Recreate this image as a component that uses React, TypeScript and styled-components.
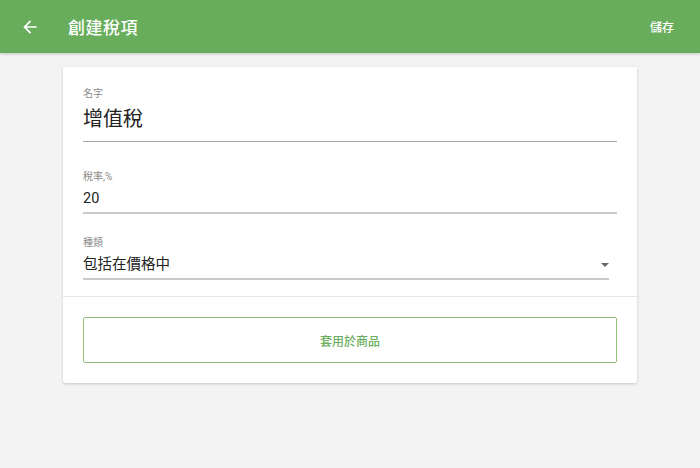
import React from "react";
import styled, { createGlobalStyle } from "styled-components";

const GlobalStyle = createGlobalStyle`
  html, body {
    margin: 0;
    padding: 0;
    background: #f3f3f3;
    font-family: Roboto, "Noto Sans CJK TC", "Noto Sans", sans-serif;
  }
`;

const green = "#68ad5c";

const App = () => {
  return (
    <>
      <GlobalStyle />
      <Page>
        <Header>
          <BackButton aria-label="back">
            <svg width="20" height="20" viewBox="0 0 24 24">
              <path
                d="M20 11H7.83l5.59-5.59L12 4l-8 8 8 8 1.41-1.41L7.83 13H20v-2z"
                fill="#fff"
              />
            </svg>
          </BackButton>
          <Title>創建稅項</Title>
          <SaveButton>儲存</SaveButton>
        </Header>
        <Card>
          <Fields>
            <Field $extra={6}>
              <Label>名字</Label>
              <NameValue>增值稅</NameValue>
              <Underline $dark />
            </Field>
            <Field>
              <Label>稅率,%</Label>
              <Value>20</Value>
              <Underline />
            </Field>
            <Field $short>
              <Label>種類</Label>
              <SelectRow>
                <Value>包括在價格中</Value>
                <Caret />
              </SelectRow>
              <Underline />
            </Field>
          </Fields>
          <Footer>
            <OutlineButton>套用於商品</OutlineButton>
          </Footer>
        </Card>
      </Page>
    </>
  );
};

const Page = styled.div`
  min-height: 468px;
  background: #f3f3f3;
`;

const Header = styled.header`
  height: 53px;
  background: ${green};
  display: flex;
  align-items: center;
  padding: 0 26px 0 20px;
  color: #fff;
  box-shadow: 0 1px 3px rgba(0, 0, 0, 0.2);
`;

const BackButton = styled.div`
  width: 20px;
  height: 20px;
  display: flex;
  align-items: center;
  justify-content: center;
  margin-right: 28px;
`;

const Title = styled.div`
  flex: 1;
  font-size: 17px;
  font-weight: 500;
  letter-spacing: 0.5px;
`;

const SaveButton = styled.div`
  font-size: 12px;
  font-weight: 500;
`;

const Card = styled.div`
  width: 574px;
  margin: 14px auto 0;
  background: #fff;
  box-shadow: 0 1px 3px rgba(0, 0, 0, 0.18);
  border-radius: 2px;
`;

const Fields = styled.div`
  padding: 20px 20px 16px;
  border-bottom: 1px solid #e6e6e6;
  display: flex;
  flex-direction: column;
  gap: 22px;
`;

const Field = styled.div<{ $short?: boolean; $extra?: number }>`
  display: flex;
  flex-direction: column;
  margin-right: ${(p) => (p.$short ? "8px" : "0")};
  margin-bottom: ${(p) => p.$extra ?? 0}px;
`;

const Label = styled.div`
  font-size: 10px;
  line-height: 14px;
  color: #8a8a8a;
  margin-bottom: 4px;
`;

const NameValue = styled.div`
  font-size: 20px;
  line-height: 28px;
  color: #222;
  margin-bottom: 8px;
`;

const Value = styled.div`
  font-size: 14.5px;
  line-height: 22px;
  color: #222;
  margin-bottom: 2px;
`;

const SelectRow = styled.div`
  display: flex;
  align-items: center;
  justify-content: space-between;
`;

const Caret = styled.div`
  width: 0;
  height: 0;
  border-left: 4.5px solid transparent;
  border-right: 4.5px solid transparent;
  border-top: 4.5px solid #666;
  margin-bottom: 3px;
`;

const Underline = styled.div<{ $dark?: boolean }>`
  height: ${(p) => (p.$dark ? "1px" : "2px")};
  background: ${(p) => (p.$dark ? "#a8a8a8" : "#cacaca")};
`;

const Footer = styled.div`
  padding: 20px;
`;

const OutlineButton = styled.div`
  height: 44px;
  border: 1px solid #8fbf78;
  border-radius: 2px;
  display: flex;
  align-items: center;
  justify-content: center;
  font-size: 12px;
  font-weight: 500;
  color: ${green};
`;

export default App;
